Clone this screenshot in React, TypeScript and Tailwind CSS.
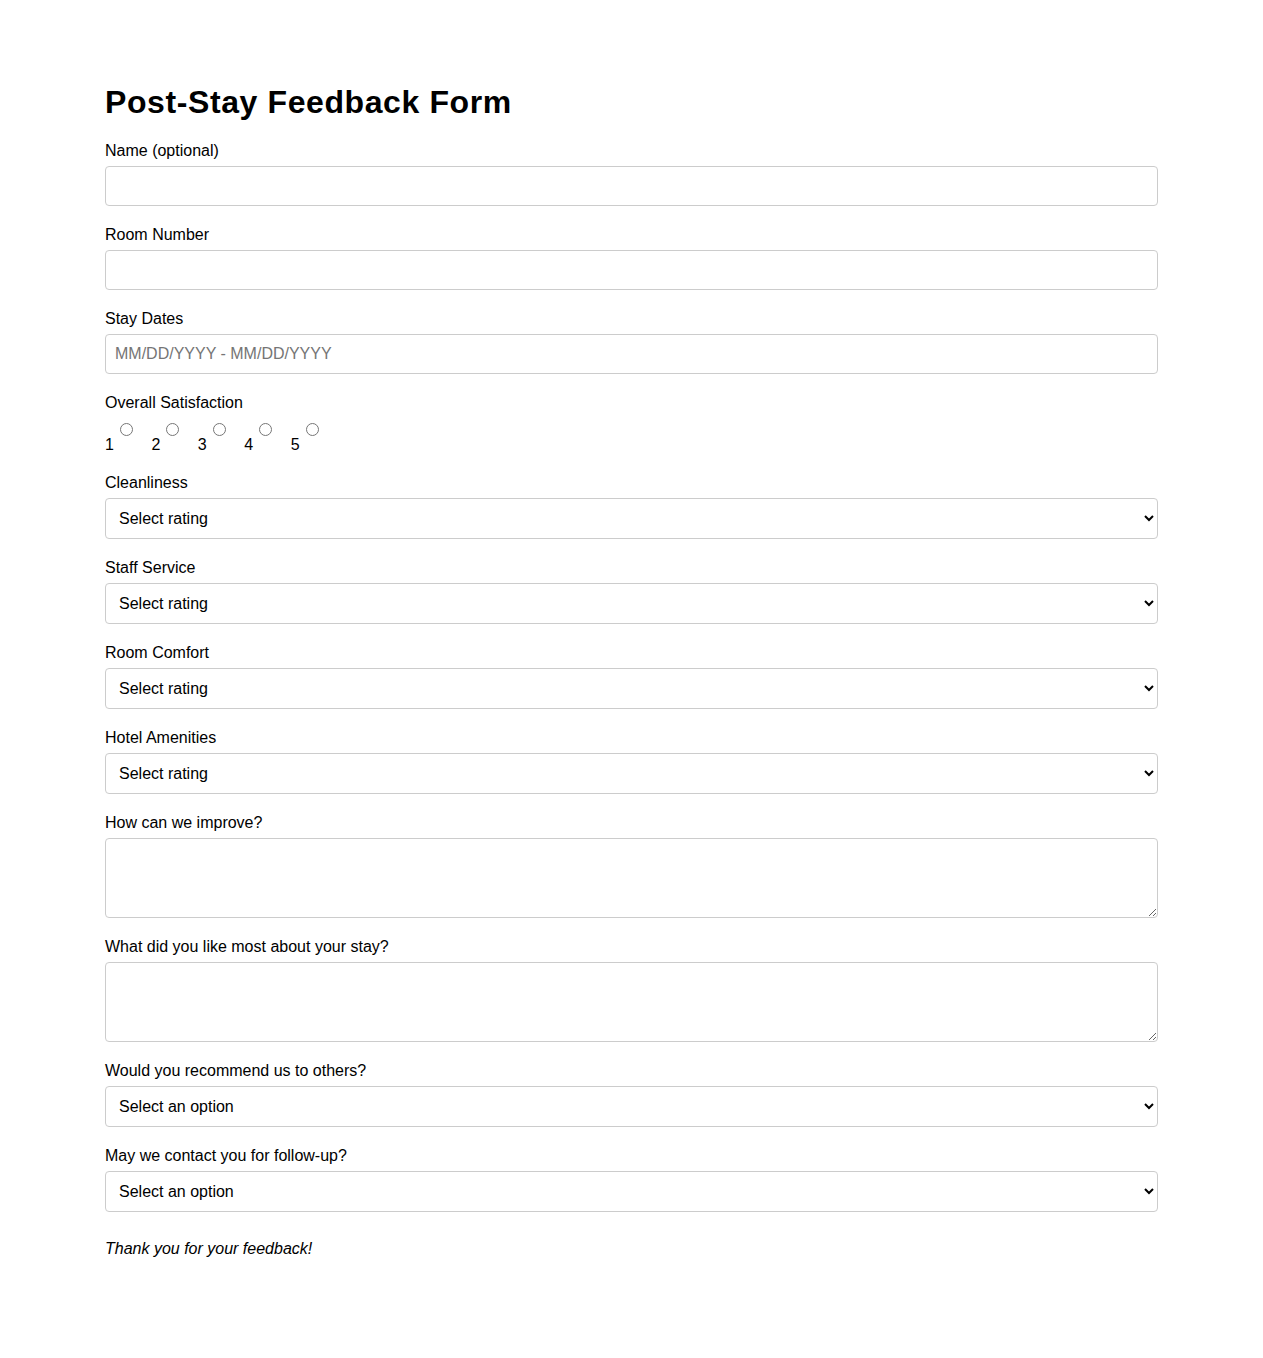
import React from 'react';

const ratingOptions = ['Select rating', 'Excellent', 'Good', 'Average', 'Poor'];
const yesNo = ['Select an option', 'Yes', 'No'];

function Field({ label, children }: { label: string; children: React.ReactNode }) {
  return (
    <div className="mb-5">
      <label className="block mb-[6px] leading-[18px]">{label}</label>
      {children}
    </div>
  );
}

function TextInput({ placeholder }: { placeholder?: string }) {
  return (
    <input
      type="text"
      placeholder={placeholder}
      className="block w-full h-10 px-[9px] border border-[#ccc] rounded leading-[18px] placeholder:text-[#757575]"
    />
  );
}

function RatingSelect({ options }: { options: string[] }) {
  return (
    <select className="block w-full h-[41px] px-[9px] border border-[#ccc] rounded bg-white leading-[18px]">
      {options.map((o) => (
        <option key={o}>{o}</option>
      ))}
    </select>
  );
}

function TextArea() {
  return <textarea className="block w-full h-20 p-[10px] border border-[#ccc] rounded leading-[18px]" />;
}

export default function App() {
  return (
    <div className="min-h-screen bg-white text-black font-['Liberation_Sans',Arial,sans-serif] text-base leading-[18px]">
      <div className="w-[1053px] mx-auto pt-[84px] pb-20">
        <h1 className="text-[32px] font-bold leading-[37px] tracking-[0.6px] mb-[21px]">Post-Stay Feedback Form</h1>

        <Field label="Name (optional)">
          <TextInput />
        </Field>
        <Field label="Room Number">
          <TextInput />
        </Field>
        <Field label="Stay Dates">
          <TextInput placeholder="MM/DD/YYYY - MM/DD/YYYY" />
        </Field>

        {/* radios sit above the digits, like the original */}
        <div className="mb-5">
          <label className="block mb-[6px] leading-[18px]">Overall Satisfaction</label>
          <div className="flex gap-[15.5px] h-[36px] items-end">
            {[1, 2, 3, 4, 5].map((n) => (
              <label key={n} className="inline-block leading-[18px]">
                {n}
                <input
                  type="radio"
                  name="overall"
                  value={n}
                  className="ml-[6px] mr-[3px] mt-[3px] align-[14px]"
                />
              </label>
            ))}
          </div>
        </div>

        <Field label="Cleanliness">
          <RatingSelect options={ratingOptions} />
        </Field>
        <Field label="Staff Service">
          <RatingSelect options={ratingOptions} />
        </Field>
        <Field label="Room Comfort">
          <RatingSelect options={ratingOptions} />
        </Field>
        <Field label="Hotel Amenities">
          <RatingSelect options={ratingOptions} />
        </Field>
        <Field label="How can we improve?">
          <TextArea />
        </Field>
        <Field label="What did you like most about your stay?">
          <TextArea />
        </Field>
        <Field label="Would you recommend us to others?">
          <RatingSelect options={yesNo} />
        </Field>
        <Field label="May we contact you for follow-up?">
          <RatingSelect options={yesNo} />
        </Field>

        <p className="italic pt-[8px]">Thank you for your feedback!</p>
      </div>
    </div>
  );
}
